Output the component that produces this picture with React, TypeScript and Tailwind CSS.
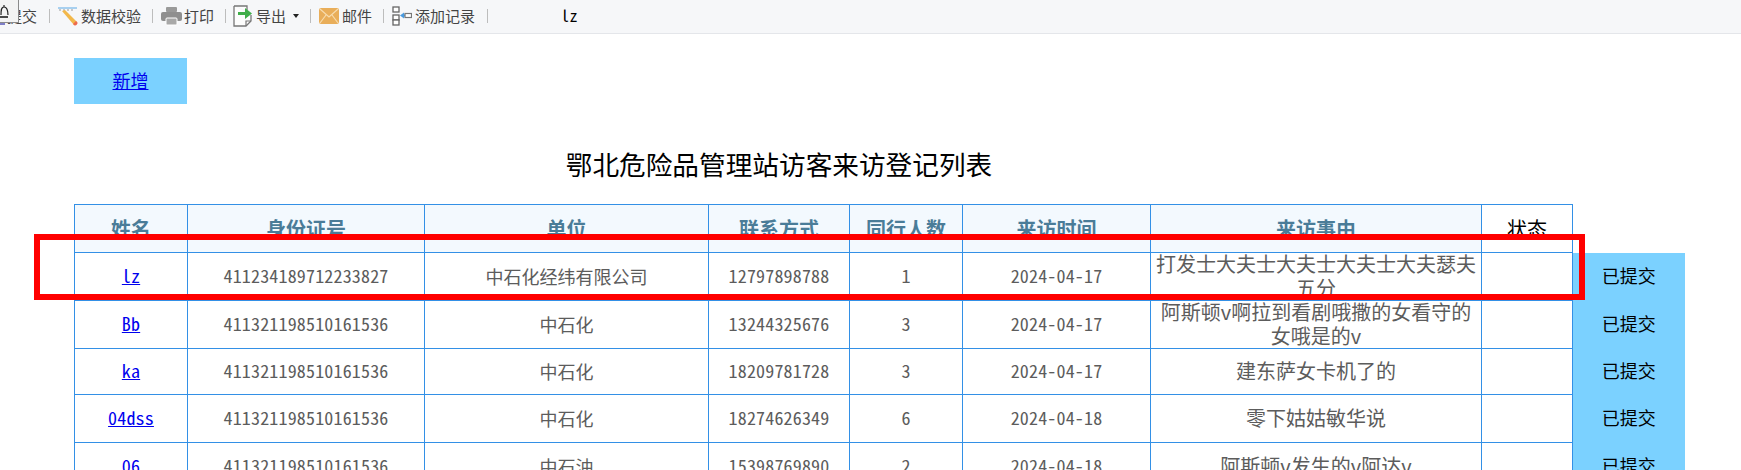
import React from 'react';

const mono = 'font-["Noto_Sans_Mono_CJK_SC","Noto_Sans_CJK_SC","Liberation_Mono",monospace]';

const PencilIcon = () => (
    <svg width="20" height="20" viewBox="0 0 20 20">
        <path d="M0 2h19" stroke="#5aa9e6" strokeWidth="1" />
        <path d="M1 4h2M5 4h2M9 4h2M13 4h2" stroke="#999" strokeWidth="1" />
        <path d="M4 5l3-1 12 12-3 3z" fill="#f2b84b" />
        <path d="M15 18l3-3 1.500 1.500c.5 1.500-1.500 3.500-3 3z" fill="#ee6a4d" />
    </svg>
);

const PrinterIcon = () => (
    <svg width="21" height="20" viewBox="0 0 21 20">
        <rect x="5" y="1" width="11" height="5" rx="1" fill="#9a9a9a" />
        <rect x="0" y="6" width="21" height="9" rx="2" fill="#8f8f8f" />
        <rect x="5" y="12" width="11" height="7" rx="1" fill="#a8a8a8" stroke="#fff" strokeWidth="1" />
    </svg>
);

const ExportIcon = () => (
    <svg width="20" height="22" viewBox="0 0 20 22">
        <path d="M1 1h13v4M18 10v6l-5 5H1V1" fill="#fdfdfd" stroke="#777" strokeWidth="1.300" />
        <path d="M13 21v-5h5" fill="none" stroke="#777" strokeWidth="1.200" />
        <path d="M5 7h7V3l7 5.500-7 5.500v-4H5z" fill="#3fae49" />
    </svg>
);

const MailIcon = () => (
    <svg width="20" height="20" viewBox="0 0 20 20">
        <rect x="0" y="2" width="20" height="16" rx="2" fill="#e9ae5a" />
        <path d="M1 3l9 8 9-8M1 17l6-8M19 17l-6-8" fill="none" stroke="#f7dcae" strokeWidth="1.200" />
    </svg>
);

const AddRecordIcon = () => (
    <svg width="20" height="20" viewBox="0 0 20 20">
        <rect x="1" y="1" width="6" height="5" fill="#fff" stroke="#666" strokeWidth="1.300" />
        <rect x="1" y="9" width="6" height="5" fill="#fff" stroke="#666" strokeWidth="1.300" />
        <rect x="1" y="14" width="6" height="5" fill="#fff" stroke="#666" strokeWidth="1.300" />
        <path d="M8 9.500l4-3v2h1v2h-1v2z" fill="#4a9be0" />
        <rect x="13" y="7.500" width="6.500" height="4" fill="#fff" stroke="#777" strokeWidth="1.200" />
    </svg>
);

const BellTip = () => (
    <div className="absolute left-0 top-0 h-[23px] w-[19px] overflow-hidden border-r border-b border-[#8a8a8a] bg-[#f3f3f3]">
        <svg width="18" height="22" viewBox="0 0 18 22">
            <path d="M4 5v2M1 15c0-4 0-8 3-8s4 4 4 8" fill="none" stroke="#222" strokeWidth="1.200" />
            <path d="M0 17h8" stroke="#111" strokeWidth="1.500" />
        </svg>
    </div>
);

const Sep = ({ className }: { className: string }) => <span className={`h-[14px] w-px bg-[#bdbdbd] ${className}`}></span>;

const Toolbar = () => (
    <div className={`relative flex h-[34px] items-center border-b border-[#e4e6ea] bg-[#f6f7f9] pb-[2px] pl-[7px] text-[15px] text-[#444] font-["Noto_Sans_CJK_SC",sans-serif]`}>
        <span>提交</span>
        <Sep className="ml-[12px]" />
        <span className="ml-[8px] flex items-center gap-[3px]"><PencilIcon />数据校验</span>
        <Sep className="ml-[11px]" />
        <span className="ml-[8px] flex items-center gap-[2px]"><PrinterIcon />打印</span>
        <Sep className="ml-[11px]" />
        <span className="ml-[7px] flex items-center gap-[3px]"><ExportIcon />导出</span>
        <span className="ml-[7px] h-0 w-0 border-x-[3px] border-t-[4px] border-x-transparent border-t-[#222]"></span>
        <Sep className="ml-[11px]" />
        <span className="ml-[8px] flex items-center gap-[3px]"><MailIcon />邮件</span>
        <Sep className="ml-[11px]" />
        <span className="ml-[8px] flex items-center gap-[3px]"><AddRecordIcon />添加记录</span>
        <Sep className="ml-[12px]" />
        <span className={`ml-[73px] pb-[2px] text-[16px] tracking-[0.5px] text-black ${mono}`}>lz</span>
        <div className="absolute left-0 top-[22px] h-[3px] w-[5px] bg-[#7f7fc8]"></div>
        <BellTip />
    </div>
);

const headers = ['姓名', '身份证号', '单位', '联系方式', '同行人数', '来访时间', '来访事由'];

const rows = [
    { h: 'h-[48px]', name: 'lz', id: '411234189712233827', unit: '中石化经纬有限公司', tel: '12797898788', n: '1', date: '2024-04-17', why: '打发士大夫士大夫士大夫士大夫瑟夫五分' },
    { h: 'h-[48px]', name: 'Bb', id: '411321198510161536', unit: '中石化', tel: '13244325676', n: '3', date: '2024-04-17', why: '阿斯顿v啊拉到看剧哦撒的女看守的女哦是的v' },
    { h: 'h-[46px]', name: 'ka', id: '411321198510161536', unit: '中石化', tel: '18209781728', n: '3', date: '2024-04-17', why: '建东萨女卡机了的' },
    { h: 'h-[48px]', name: '04dss', id: '411321198510161536', unit: '中石化', tel: '18274626349', n: '6', date: '2024-04-18', why: '零下姑姑敏华说' },
    { h: 'h-[48px]', name: '06', id: '411321198510161536', unit: '中石油', tel: '15398769890', n: '2', date: '2024-04-18', why: '阿斯顿v发生的v阿达v' },
];

const cell = 'border border-[#3390e6] p-0 text-center align-middle';
const digits = `pb-[4px] tracking-[0.17px] text-[#5c5c5c] ${mono}`;

const App: React.FC = () => {
    return (
        <div className={`relative h-[470px] w-[1741px] overflow-hidden bg-white text-[18px] leading-[24px] font-["Noto_Sans_CJK_SC",sans-serif]`}>
            <Toolbar />
            <div className="ml-[74px] mt-[24px] flex h-[46px] w-[113px] items-center justify-center bg-[#7bd1ff]">
                <a href="#" className="pb-[3px] text-[#0000ee] underline">新增</a>
            </div>
            <h1 className="ml-[74px] mt-[42px] w-[1410px] text-center text-[26.67px] leading-[36px] text-black">鄂北危险品管理站访客来访登记列表</h1>
            <table className="ml-[74px] mt-[22px] w-[1610px] table-fixed border-collapse">
                <colgroup>
                    <col className="w-[113px]" />
                    <col className="w-[237px]" />
                    <col className="w-[284px]" />
                    <col className="w-[141px]" />
                    <col className="w-[113px]" />
                    <col className="w-[188px]" />
                    <col className="w-[331px]" />
                    <col className="w-[91px]" />
                    <col className="w-[112px]" />
                </colgroup>
                <thead>
                    <tr className="h-[48px]">
                        {headers.map((t) => (
                            <th key={t} className={`${cell} bg-[#f3f9fe] text-[20px] font-bold text-[#4a7c98]`}>{t}</th>
                        ))}
                        <th className={`${cell} text-[20px] font-normal text-black`}>状态</th>
                        <th className="p-0"></th>
                    </tr>
                </thead>
                <tbody>
                    {rows.map((r, i) => (
                        <tr key={i} className={r.h}>
                            <td className={`${cell} pb-[4px] ${mono}`}><a href="#" className="tracking-[0.17px] text-[#0000ee] underline">{r.name}</a></td>
                            <td className={`${cell} ${digits}`}>{r.id}</td>
                            <td className={`${cell} pb-[2px] text-[#5c5c5c]`}>{r.unit}</td>
                            <td className={`${cell} ${digits}`}>{r.tel}</td>
                            <td className={`${cell} ${digits}`}>{r.n}</td>
                            <td className={`${cell} ${digits}`}>{r.date}</td>
                            {/* two line reasons overflow the row a little instead of growing it */}
                            <td className={`${cell} px-1 pb-[2px] text-[20px] text-[#5c5c5c]`}><div className="-my-1">{r.why}</div></td>
                            <td className={cell}></td>
                            <td className="bg-[#7bd1ff] p-0 pb-[4px] text-center text-black">已提交</td>
                        </tr>
                    ))}
                </tbody>
            </table>
            {/* red annotation box drawn over the screenshot */}
            <div className="absolute left-[34px] top-[234px] h-[66px] w-[1551px] border-[6px] border-[#ff0000]"></div>
        </div>
    );
};

export default App;
